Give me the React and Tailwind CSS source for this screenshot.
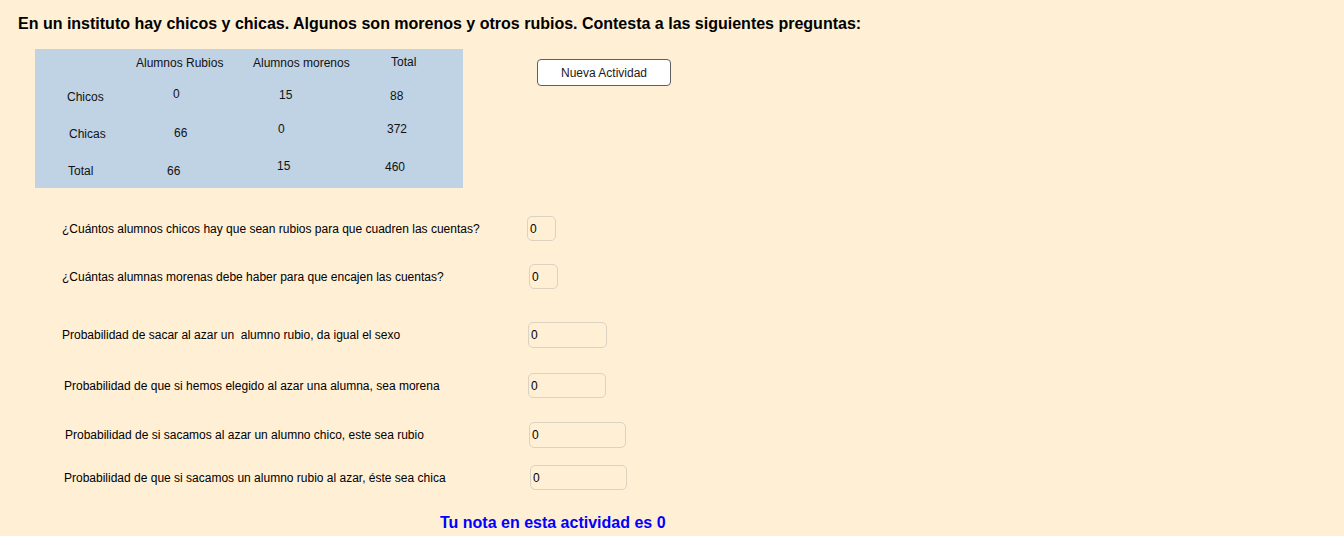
import React from "react";

const font = { fontFamily: '"Liberation Sans", Arial, sans-serif' };

function Cell({ pl, pt, children }) {
  return <div className={`${pl} ${pt} whitespace-nowrap`}>{children}</div>;
}

const questions = [
  { text: "¿Cuántos alumnos chicos hay que sean rubios para que cuadren las cuentas?", row: "mt-[28px] h-[25px] pl-[62px]", tw: "w-[465px]", iw: "w-[29px]" },
  { text: "¿Cuántas alumnas morenas debe haber para que encajen las cuentas?", row: "mt-[23px] h-[25px] pl-[62px]", tw: "w-[467px]", iw: "w-[29px]" },
  { text: "Probabilidad de sacar al azar un  alumno rubio, da igual el sexo", row: "mt-[33px] h-[26px] pl-[62px]", tw: "w-[466px]", iw: "w-[79px]" },
  { text: "Probabilidad de que si hemos elegido al azar una alumna, sea morena", row: "mt-[25px] h-[25px] pl-[64px]", tw: "w-[464px]", iw: "w-[78px]" },
  { text: "Probabilidad de si sacamos al azar un alumno chico, este sea rubio", row: "mt-[24px] h-[26px] pl-[65px]", tw: "w-[464px]", iw: "w-[97px]" },
  { text: "Probabilidad de que si sacamos un alumno rubio al azar, éste sea chica", row: "mt-[17px] h-[25px] pl-[64px]", tw: "w-[466px]", iw: "w-[97px]" },
];

export default function App() {
  return (
    <div className="w-[1344px] h-[536px] overflow-hidden bg-[#ffefd5] text-black" style={font}>
      <div className="pt-[15px] pl-[18px] text-[16px] leading-[18px] font-bold whitespace-nowrap">
        En un instituto hay chicos y chicas. Algunos son morenos y otros rubios. Contesta a las siguientes preguntas:
      </div>

      <div className="flex items-start mt-[16px] pl-[35px]">
        <div className="w-[428px] h-[139px] bg-[#bfd3e5] text-[12px] leading-[14px] text-[#111] grid grid-cols-[100px_110px_130px_88px] grid-rows-[36px_36px_36px_31px]">
          <Cell pl="pl-0" pt="pt-0"></Cell>
          <Cell pl="pl-[1px]" pt="pt-[7px]">Alumnos Rubios</Cell>
          <Cell pl="pl-[8px]" pt="pt-[7px]">Alumnos morenos</Cell>
          <Cell pl="pl-[16px]" pt="pt-[6px]">Total</Cell>

          <Cell pl="pl-[32px]" pt="pt-[5px]">Chicos</Cell>
          <Cell pl="pl-[38px]" pt="pt-[2px]">0</Cell>
          <Cell pl="pl-[34px]" pt="pt-[3px]">15</Cell>
          <Cell pl="pl-[15px]" pt="pt-[4px]">88</Cell>

          <Cell pl="pl-[34px]" pt="pt-[6px]">Chicas</Cell>
          <Cell pl="pl-[39px]" pt="pt-[5px]">66</Cell>
          <Cell pl="pl-[33px]" pt="pt-[1px]">0</Cell>
          <Cell pl="pl-[12px]" pt="pt-[1px]">372</Cell>

          <Cell pl="pl-[33px]" pt="pt-[7px]">Total</Cell>
          <Cell pl="pl-[32px]" pt="pt-[7px]">66</Cell>
          <Cell pl="pl-[32px]" pt="pt-[2px]">15</Cell>
          <Cell pl="pl-[10px]" pt="pt-[3px]">460</Cell>
        </div>

        <button className="ml-[74px] mt-[10px] w-[134px] h-[27px] bg-white border border-[#5f5f5f] rounded-[4px] text-[12px] text-[#1a1a1a]" style={font}>
          Nueva Actividad
        </button>
      </div>

      {questions.map((q, i) => (
        <div key={i} className={`flex items-center ${q.row}`}>
          <div className={`${q.tw} text-[12px] leading-[14px] whitespace-pre`}>{q.text}</div>
          <div className={`${q.iw} h-full border border-[#dcd2c2] rounded-[5px] flex items-center pl-[2px] text-[12px]`}>0</div>
        </div>
      ))}

      <div className="mt-[24px] pl-[440px] text-[16px] leading-[18px] font-bold text-[#0000ff] whitespace-nowrap">
        Tu nota en esta actividad es 0
      </div>
    </div>
  );
}
